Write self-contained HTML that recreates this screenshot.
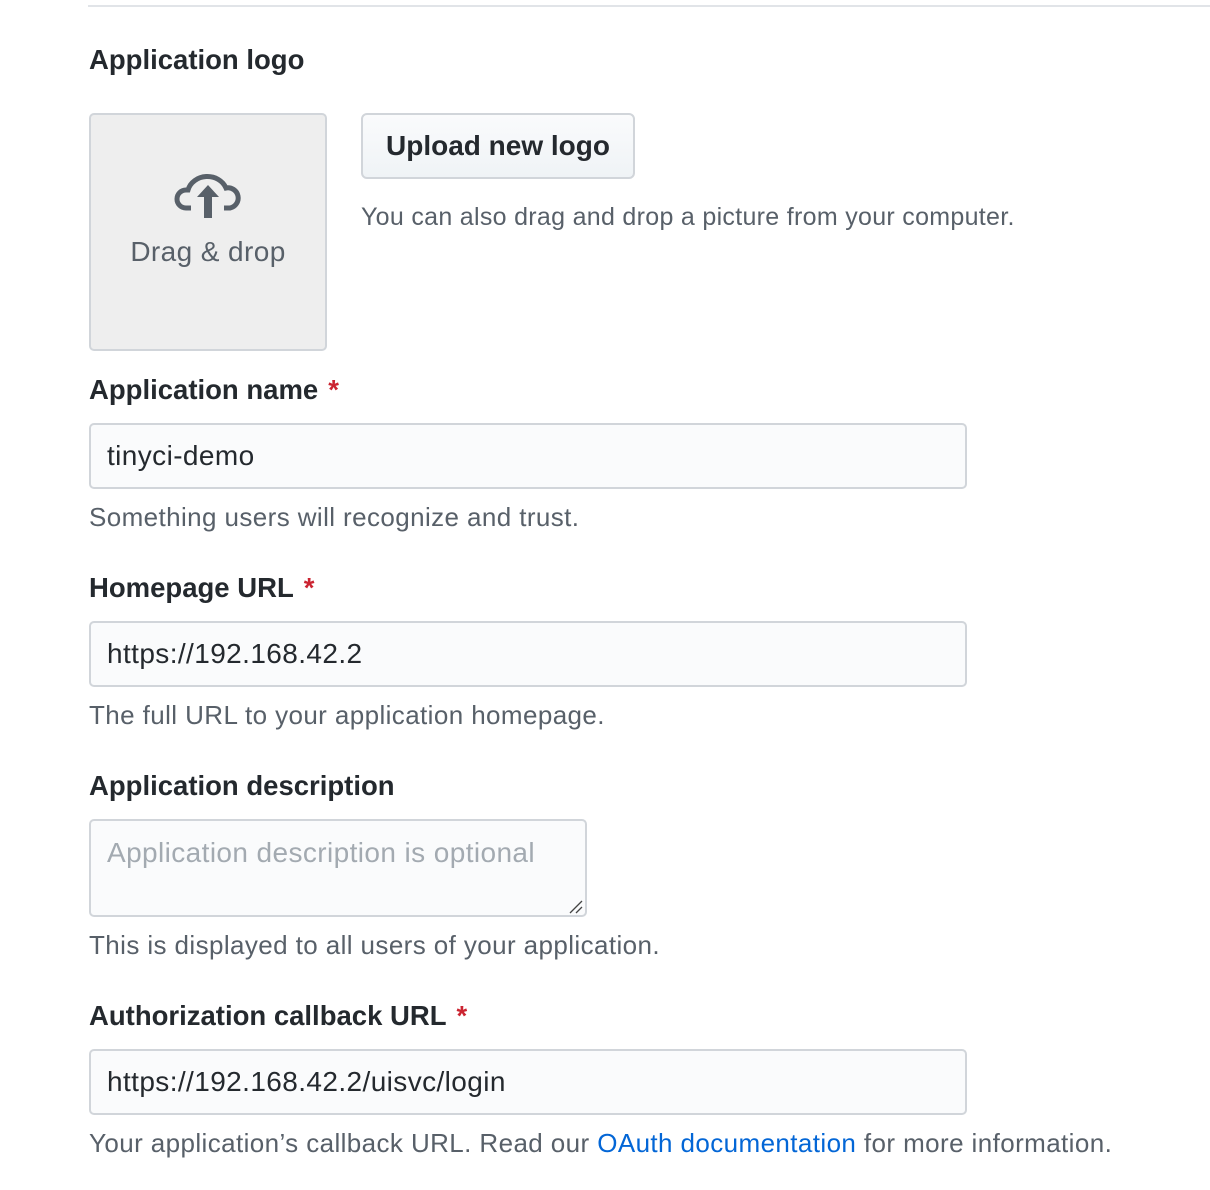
<!DOCTYPE html>
<html><head><meta charset="utf-8"><style>
*{margin:0;padding:0;box-sizing:border-box}
body{width:1210px;height:1190px;background:#fff;position:relative;font-family:"Liberation Sans",Helvetica,Arial,sans-serif;overflow:hidden}
.a{position:absolute;white-space:nowrap}
.lbl{font-weight:bold;font-size:27.5px;color:#24292e;line-height:30px}
.req{color:#cb2431;margin-left:10px}
.hint{font-size:26px;letter-spacing:0.4px;color:#586069;line-height:30px}
.inp{background:#fafbfc;border:2px solid #d1d5da;border-radius:5px;font-size:28px;letter-spacing:0.4px;color:#24292e;padding-left:16px;display:flex;align-items:center}
</style></head><body>
<div class="a" style="left:88px;top:5px;width:1122px;height:2px;background:#e1e4e8"></div>
<div class="a lbl" style="left:89px;top:45px">Application logo</div>
<div class="a" style="left:89px;top:113px;width:238px;height:238px;background:#eeeeee;border:2px solid #d1d5da;border-radius:5px"></div>
<svg class="a" style="left:174px;top:168px" width="68" height="52" viewBox="0 0 68 52">
<path d="M17 40 H12 A9 9 0 0 1 12 22 H14 A20 18 0 0 1 52 20 A9.5 9.5 0 0 1 56 40 H50" fill="none" stroke="#586069" stroke-width="5"/>
<path d="M34 17 L23 29 H30 V50 H38 V29 H45 Z" fill="#586069"/>
</svg>
<div class="a" style="left:89px;top:236px;width:238px;text-align:center;font-size:28px;letter-spacing:0.4px;color:#586069">Drag &amp; drop</div>
<div class="a" style="left:361px;top:113px;width:274px;height:66px;border:2px solid #d1d5da;border-radius:6px;background:linear-gradient(#fafbfc,#eff3f6);font-weight:bold;font-size:28px;color:#24292e;display:flex;align-items:center;justify-content:center">Upload new logo</div>
<div class="a hint" style="left:361px;top:202px;font-size:25px;letter-spacing:0.3px">You can also drag and drop a picture from your computer.</div>

<div class="a lbl" style="left:89px;top:375px">Application name<span class="req">*</span></div>
<div class="a inp" style="left:89px;top:423px;width:878px;height:66px">tinyci-demo</div>
<div class="a hint" style="left:89px;top:502px">Something users will recognize and trust.</div>

<div class="a lbl" style="left:89px;top:573px">Homepage URL<span class="req">*</span></div>
<div class="a inp" style="left:89px;top:621px;width:878px;height:66px">https://192.168.42.2</div>
<div class="a hint" style="left:89px;top:700px">The full URL to your application homepage.</div>

<div class="a lbl" style="left:89px;top:771px">Application description</div>
<div class="a inp" style="left:89px;top:819px;width:498px;height:98px;align-items:flex-start;padding-top:16px;color:#a3aab1">Application description is optional</div>
<svg class="a" style="left:568px;top:899px" width="16" height="16"><path d="M2 14 L14 2 M8 14 L14 8" stroke="#444" stroke-width="1.3"/></svg>
<div class="a hint" style="left:89px;top:930px">This is displayed to all users of your application.</div>

<div class="a lbl" style="left:89px;top:1001px">Authorization callback URL<span class="req">*</span></div>
<div class="a inp" style="left:89px;top:1049px;width:878px;height:66px">https://192.168.42.2/uisvc/login</div>
<div class="a hint" style="left:89px;top:1128px">Your application’s callback URL. Read our <span style="color:#0366d6">OAuth documentation</span> for more information.</div>
</body></html>
